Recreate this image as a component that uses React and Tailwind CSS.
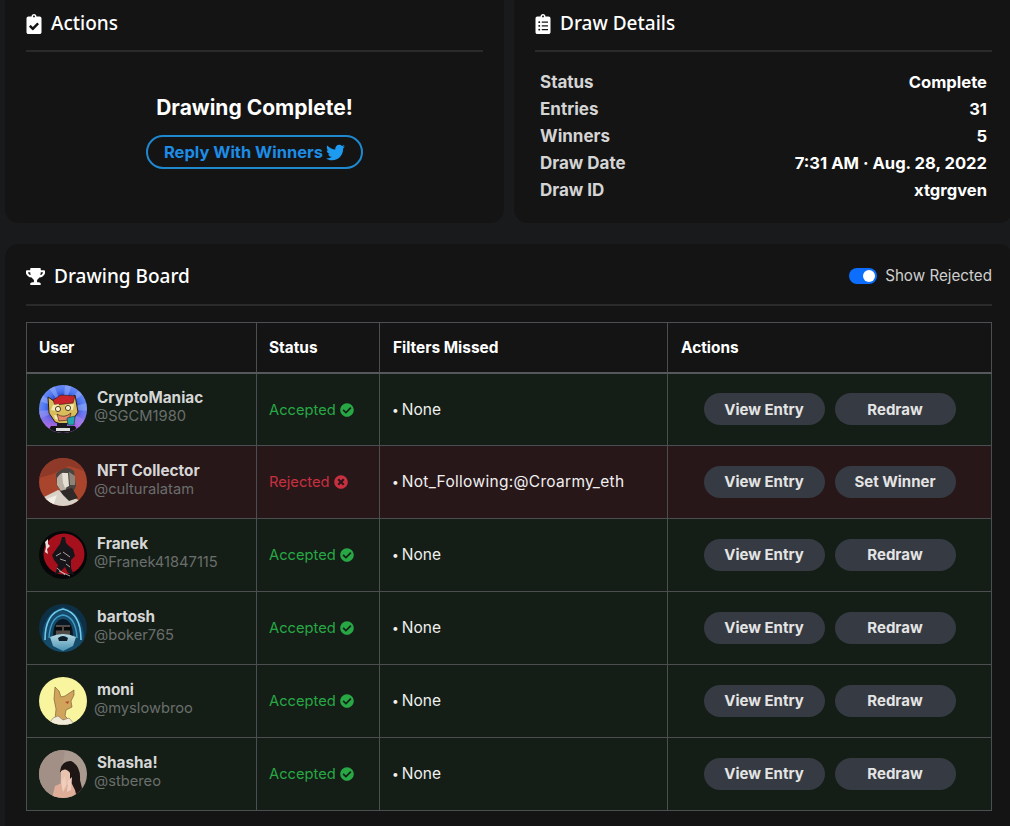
import React from 'react';
import { FaClipboardCheck, FaClipboardList, FaTrophy, FaCheckCircle, FaTimesCircle, FaTwitter } from 'react-icons/fa';

const body = "font-['Inter','Liberation_Sans',sans-serif]";
const title = "font-['Noto_Sans','Open_Sans',sans-serif]";

function AvatarCat() {
  return (
    <svg viewBox="0 0 48 48" className="w-12 h-12">
      <defs>
        <radialGradient id="catBg" cx="50%" cy="50%" r="52%">
          <stop offset="45%" stopColor="#1f3fc8" />
          <stop offset="75%" stopColor="#4f78f0" />
          <stop offset="100%" stopColor="#6f8cf5" />
        </radialGradient>
        <linearGradient id="catLow" x1="0" y1="0" x2="0" y2="1">
          <stop offset="0%" stopColor="#8a5ae6" stopOpacity="0" />
          <stop offset="100%" stopColor="#d860d8" />
        </linearGradient>
        <clipPath id="catClip"><circle cx="24" cy="24" r="24" /></clipPath>
      </defs>
      <g clipPath="url(#catClip)">
        <rect width="48" height="48" fill="url(#catBg)" />
        <path d="M24 24 L0 8 L0 16Z M24 24 L0 26 L0 34Z M24 24 L8 0 L15 0Z M24 24 L26 0 L33 0Z M24 24 L44 0 L48 6Z M24 24 L48 18 L48 26Z M24 24 L48 36 L42 44Z" fill="#9db4fa" opacity=".5" />
        <rect y="22" width="48" height="26" fill="url(#catLow)" />
        <path d="M12 41 L36 41 L40 48 H8Z" fill="#141418" />
        <path d="M9 12 L15 16 L30 15 L36 10 L39 27 L33 36 L25 40 L16 37 L10 28Z" fill="#d9bc5c" stroke="#2e1c10" strokeWidth="1" />
        <path d="M14 15 L22 10 L36 11 L34 18 L16 20Z" fill="#c9242c" stroke="#2e1c10" strokeWidth=".6" />
        <path d="M14 20 L20 19 L18 26 L12 25Z M26 20 L35 19 L34 25 L28 25Z M15 30 L21 31 L20 35 L16 34Z" fill="#f2ecb0" />
        <circle cx="19" cy="24" r="2.6" fill="#f6f0d0" stroke="#2e1c10" strokeWidth=".8" />
        <circle cx="29" cy="23" r="2.6" fill="#f6f0d0" stroke="#2e1c10" strokeWidth=".8" />
        <path d="M18 29 Q25 34 32 28 L30 35 L20 36Z" fill="#e88468" stroke="#2e1c10" strokeWidth=".6" />
        <path d="M28 33 L36 31 L35 40 L29 40Z" fill="#25a4ac" stroke="#14202a" strokeWidth=".5" />
        <rect x="18" y="38" width="10" height="5" fill="#1a1a20" />
        <rect x="17" y="43" width="14" height="3" fill="#dcdcdc" />
      </g>
    </svg>
  );
}

function AvatarBust() {
  return (
    <svg viewBox="0 0 48 48" className="w-12 h-12">
      <defs><clipPath id="bustClip"><circle cx="24" cy="24" r="24" /></clipPath></defs>
      <g clipPath="url(#bustClip)">
        <rect width="48" height="48" fill="#a8452c" />
        <path d="M0 0 H48 V14 L30 8 L14 16 L0 20Z" fill="#8f3a28" />
        <path d="M17 16 Q27 6 35 13 L37 28 L33 37 L24 36 L18 28Z" fill="#4a4440" />
        <path d="M18 20 Q23 12 28 16 L27 33 L22 33 L18 27Z" fill="#b8b0a4" />
        <path d="M23 15 L29 15 L30 28 L26 30 L24 25Z" fill="#e6e0d4" />
        <path d="M30 14 L36 18 L36 27 L31 27Z" fill="#8c8478" />
        <path d="M3 40 L19 32 L27 35 L41 43 L36 48 H3Z" fill="#d8d2c8" />
        <path d="M21 33 L33 30 L39 40 L30 43 L24 37Z" fill="#2e2a28" />
        <path d="M5 42 L18 37 L14 48 H5Z" fill="#f2eee6" />
      </g>
    </svg>
  );
}

function AvatarSamurai() {
  return (
    <svg viewBox="0 0 48 48" className="w-12 h-12">
      <defs><clipPath id="samClip"><circle cx="24" cy="24" r="24" /></clipPath></defs>
      <g clipPath="url(#samClip)">
        <rect width="48" height="48" fill="#060608" />
        <circle cx="25" cy="23" r="20.5" fill="#a5101c" />
        <path d="M23 6 L26 6 L27 12 L30 15 L34 18 L36 25 L32 29 L32 37 L35 44 L29 42 L26 36 L21 41 L16 44 L19 34 L15 29 L13 24 L18 17 L21 13Z" fill="#17151a" />
        <path d="M18 37 L26 44 M20 40 L31 45 M24 21 L31 26 M21 28 L27 30 M17 25 L22 22 M27 33 L31 36" stroke="#cfc8c0" strokeWidth=".8" />
        <path d="M6 11 L9 8 L9 13 L11 15 L8 18 L9 23 L6 21 L7 16Z" fill="#e8dcdc" />
      </g>
    </svg>
  );
}

function AvatarWizard() {
  return (
    <svg viewBox="0 0 48 48" className="w-12 h-12">
      <defs>
        <clipPath id="wizClip"><circle cx="24" cy="24" r="24" /></clipPath>
        <linearGradient id="wizBeard" x1="0" y1="0" x2="0" y2="1">
          <stop offset="0%" stopColor="#b4d8e2" />
          <stop offset="100%" stopColor="#4a94b4" />
        </linearGradient>
      </defs>
      <g clipPath="url(#wizClip)">
        <rect width="48" height="48" fill="#0d3046" />
        <path d="M3 38 Q2 10 24 3 Q46 10 45 38 L48 48 H0Z" fill="#154a68" />
        <path d="M6 36 Q6 9 24 5 Q42 9 42 36" fill="none" stroke="#6fcaee" strokeWidth="1.6" />
        <path d="M10 34 Q11 13 24 11 Q37 13 38 34" fill="none" stroke="#3f9cc8" strokeWidth="1.4" />
        <path d="M14 33 Q14 16 24 15 Q34 16 34 33 L30 40 H18Z" fill="#081722" />
        <path d="M17 21 H31 V31 H17Z" fill="#504b46" />
        <path d="M16 23 H23 V26.5 H16Z M25 23 H32 V26.5 H25Z" fill="#07080a" />
        <path d="M11 33 Q24 27 37 33 L34 42 L24 47 L14 42Z" fill="url(#wizBeard)" />
        <path d="M19 34 Q24 30 29 34 L28 37 H20Z" fill="#0d1c28" />
      </g>
    </svg>
  );
}

function AvatarLlama() {
  return (
    <svg viewBox="0 0 48 48" className="w-12 h-12">
      <defs><clipPath id="llamaClip"><circle cx="24" cy="24" r="24" /></clipPath></defs>
      <g clipPath="url(#llamaClip)">
        <rect width="48" height="48" fill="#f9f59e" />
        <path d="M16 10 L20 14 L22 20 L26 19 L35 13 L35 18 L32 24 L33 30 L27 33 L26 39 L30 43 H16 L17 32 L15 22Z" fill="#d1a45c" stroke="#6c5230" strokeWidth=".6" />
        <path d="M26 25 L30 24 L29 27Z" fill="#b5482c" />
        <path d="M9 48 L14 41 L19 39 L24 43 L30 41 L36 48Z" fill="#f2ead8" stroke="#8a7a60" strokeWidth=".6" />
      </g>
    </svg>
  );
}

function AvatarGirl() {
  return (
    <svg viewBox="0 0 48 48" className="w-12 h-12">
      <defs><clipPath id="girlClip"><circle cx="24" cy="24" r="24" /></clipPath></defs>
      <g clipPath="url(#girlClip)">
        <rect width="48" height="48" fill="#ab9a90" />
        <path d="M0 0 H26 L18 48 H0Z" fill="#a28f86" />
        <path d="M21 22 Q22 11 32 11 Q42 16 41 30 L44 42 L35 46 L32 30 L27 22Z" fill="#1e1614" />
        <path d="M22 21 Q27 17 31 23 L31 33 L26 37 L22 31Z" fill="#e8c4b0" />
        <path d="M13 48 L16 36 L23 33 L28 36 L33 34 L36 40 L38 48Z" fill="#dfae98" />
        <path d="M22 32 L26 26 L27 36 L24 42Z M29 31 L33 27 L32 40 L28 42Z" fill="#f0cdbc" />
      </g>
    </svg>
  );
}

const rows = [
  { name: 'CryptoManiac', handle: '@SGCM1980', avatar: <AvatarCat /> },
  { name: 'NFT Collector', handle: '@culturalatam', avatar: <AvatarBust />, rejected: true },
  { name: 'Franek', handle: '@Franek41847115', avatar: <AvatarSamurai /> },
  { name: 'bartosh', handle: '@boker765', avatar: <AvatarWizard /> },
  { name: 'moni', handle: '@myslowbroo', avatar: <AvatarLlama /> },
  { name: 'Shasha!', handle: '@stbereo', avatar: <AvatarGirl /> },
];

const details = [
  ['Status', 'Complete'],
  ['Entries', '31'],
  ['Winners', '5'],
  ['Draw Date', '7:31 AM · Aug. 28, 2022'],
  ['Draw ID', 'xtgrgven'],
];

function CardTitle({ icon, children }) {
  return (
    <div className={`${title} flex items-center gap-[9px] text-[19px] font-medium text-white`}>
      {icon}
      <span>{children}</span>
    </div>
  );
}

function Pill({ children }) {
  return (
    <button className="w-[121px] h-8 pt-[1px] rounded-full bg-[#363a42] text-[15px] font-bold text-[#e4e4e4]">
      {children}
    </button>
  );
}

export default function App() {
  return (
    <div className={`${body} w-[1010px] h-[826px] overflow-hidden bg-[#181a1c]`}>
      <div className="w-[1013px] pl-[5px]">
        <div className="flex gap-[10px] -mt-[21px]">
          <div className="w-[499px] h-[244px] rounded-[14px] bg-[#141414] px-[21px] pt-[21px]">
            <div className="h-[52px] pb-[3px] border-b-2 border-[#2a2a2a] flex items-center">
              <CardTitle icon={<FaClipboardCheck className="w-4 h-5" />}>Actions</CardTitle>
            </div>
            <div className="flex flex-col items-center mt-[42px]">
              <div className="text-[21px] leading-[28px] font-bold text-white">Drawing Complete!</div>
              <button className="mt-[13px] h-[34px] w-[217px] rounded-full border-2 border-[#1f88cf] flex items-center justify-center gap-[3px] text-[16.5px] font-bold text-[#1d8ce6]">
                Reply With Winners <FaTwitter className="w-[19px] h-[19px] text-[#1d9bf0]" />
              </button>
            </div>
          </div>
          <div className="w-[499px] h-[244px] rounded-[14px] bg-[#141414] px-[21px] pt-[21px]">
            <div className="h-[52px] pb-[3px] border-b-2 border-[#2a2a2a] flex items-center">
              <CardTitle icon={<FaClipboardList className="w-4 h-5" />}>Draw Details</CardTitle>
            </div>
            <div className="mt-[17px] px-[5px] text-[16.6px] font-bold">
              {details.map(([label, value]) => (
                <div key={label} className="flex justify-between h-[27px] items-center">
                  <span className="text-[17px] text-[#d4d4d4]">{label}</span>
                  <span className="text-white">{value}</span>
                </div>
              ))}
            </div>
          </div>
        </div>

        <div className="mt-[21px] h-[600px] rounded-[14px] bg-[#141414] pl-[21px] pr-[21px]">
          <div className="h-[62px] pt-[5px] border-b-2 border-[#2a2a2a] flex items-center justify-between">
            <CardTitle icon={<FaTrophy className="w-[19px] h-[17px]" />}>Drawing Board</CardTitle>
            <div className="flex items-center gap-[8px]">
              <div className="w-7 h-4 rounded-full bg-[#0d6efd] flex items-center justify-end pr-[2px]">
                <div className="w-3 h-3 rounded-full bg-white" />
              </div>
              <span className="text-[15.2px] text-[#cfcfcf]">Show Rejected</span>
            </div>
          </div>

          <table className="mt-[16px] w-[965px] table-fixed border-collapse text-[15.4px]">
            <colgroup>
              <col className="w-[230px]" />
              <col className="w-[123px]" />
              <col className="w-[288px]" />
              <col className="w-[324px]" />
            </colgroup>
            <thead>
              <tr className="h-[50px] text-left text-white font-bold">
                <th className="border border-[#4b4f52] border-b-2 border-b-[#54585a] pl-3">User</th>
                <th className="border border-[#4b4f52] border-b-2 border-b-[#54585a] pl-3">Status</th>
                <th className="border border-[#4b4f52] border-b-2 border-b-[#54585a] pl-[13px]">Filters Missed</th>
                <th className="border border-[#4b4f52] border-b-2 border-b-[#54585a] pl-[13px]">Actions</th>
              </tr>
            </thead>
            <tbody>
              {rows.map(row => (
                <tr key={row.handle} className={`h-[73px] ${row.rejected ? 'bg-[#281719]' : 'bg-[#141e16]'}`}>
                  <td className="border border-[#4b4f52] pl-3">
                    <div className="flex items-center gap-[7px]">
                      <div className="shrink-0">{row.avatar}</div>
                      <div className="leading-[18px] pb-[4px]">
                        <div className="pl-[3px] font-bold text-[15.3px] text-[#d6d6d6]">{row.name}</div>
                        <div className="text-[14.7px] text-[#6a6e6c]">{row.handle}</div>
                      </div>
                    </div>
                  </td>
                  <td className="border border-[#4b4f52] pl-3 pt-[1px]">
                    {row.rejected ? (
                      <span className="flex items-center gap-[4px] text-[14.7px] text-[#c9303f]">
                        Rejected <FaTimesCircle className="w-[14px] h-[14px]" />
                      </span>
                    ) : (
                      <span className="flex items-center gap-[4px] text-[14.7px] text-[#28a745]">
                        Accepted <FaCheckCircle className="w-[14px] h-[14px]" />
                      </span>
                    )}
                  </td>
                  <td className="border border-[#4b4f52] pl-3 text-[15.5px] text-[#f0f0f0]">
                    <span className="text-[12px] align-[1px] mr-[3px]">•</span>
                    {row.rejected ? <span className="tracking-[0.3px]">Not_Following:@Croarmy_eth</span> : 'None'}
                  </td>
                  <td className="border border-[#4b4f52]">
                    <div className="flex justify-center gap-[10px]">
                      <Pill>View Entry</Pill>
                      <Pill>{row.rejected ? 'Set Winner' : 'Redraw'}</Pill>
                    </div>
                  </td>
                </tr>
              ))}
            </tbody>
          </table>
        </div>
      </div>
    </div>
  );
}
